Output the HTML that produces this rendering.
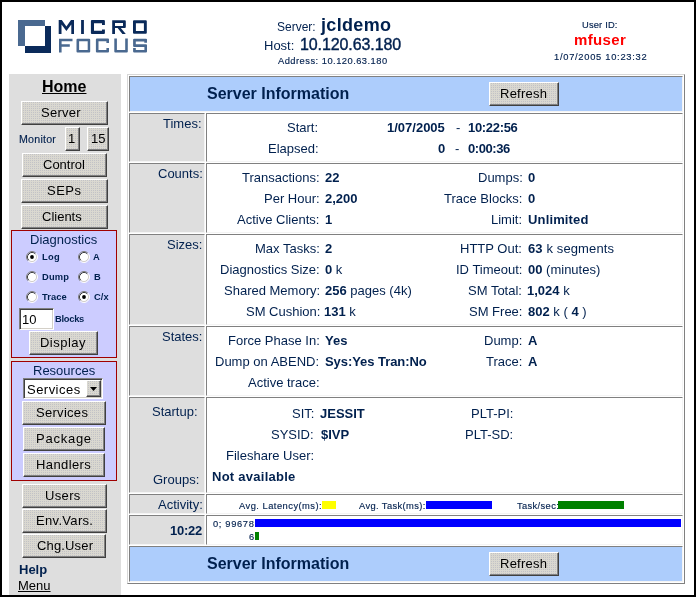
<!DOCTYPE html><html><head><meta charset="utf-8"><style>
html,body{margin:0;padding:0;width:696px;height:597px;overflow:hidden;background:#fff;}
body{position:relative;font-family:"Liberation Sans",sans-serif;}
.t{will-change:transform;}
b{font-weight:bold}
</style></head><body>
<div style="position:absolute;left:0px;top:0px;width:696px;height:597px;border:2px solid #000;box-sizing:border-box;background:#fff;"></div>
<svg style="position:absolute;left:0;top:0" width="160" height="60" viewBox="0 0 160 60">
<path fill="#4a6990" d="M18 20H45V26H25V46H18Z"/>
<path fill="#0a2a5a" d="M45 26H51V53H25V46H45Z"/>
<g fill="#0a2a5a">
<path d="M58.7 34V20H61.8L66.4 26.6L71 20H74V34H71.3V24.6L66.4 31L61.5 24.6V34Z"/>
<rect x="81.1" y="20" width="2.8" height="14"/>
<path d="M104.9 25.1V21Q104.9 20 103.9 20H91.9Q90.9 20 90.9 21V33Q90.9 34 91.9 34H103.9Q104.9 34 104.9 33V29.5H102V30.8H94V23.3H102V25.1Z"/>
<path d="M112.2 34V20.2H124.8Q125.8 20.2 125.8 21.2V27.1Q125.8 28.1 124.8 28.1H120.8L125.8 33.9H122.4L117.6 28.1H115V34ZM115 23H123V25.9H115Z" fill-rule="evenodd"/>
<path d="M134 20.2H145.8Q146.8 20.2 146.8 21.2V32.8Q146.8 33.8 145.8 33.8H134Q133 33.8 133 32.8V21.2Q133 20.2 134 20.2ZM135.9 23.2V31H143.9V23.2Z" fill-rule="evenodd"/>
</g>
<g fill="#4a6990">
<path d="M59 52.5V38.7H72.5V41.2H61.6V44.2H69.8V46.8H61.6V52.5Z"/>
<path d="M77.5 38.7H89.2Q90.2 38.7 90.2 39.7V51.5Q90.2 52.5 89.2 52.5H77.5Q76.5 52.5 76.5 51.5V39.7Q76.5 38.7 77.5 38.7ZM79.1 41.3V49.9H87.7V41.3Z" fill-rule="evenodd"/>
<path d="M109 43.1V39.6Q109 38.6 108 38.6H96.9Q95.9 38.6 95.9 39.6V51.6Q95.9 52.6 96.9 52.6H108Q109 52.6 109 51.6V48H106.4V50H98.5V41.2H106.4V43.1Z"/>
<path d="M114.3 38.6H116.9V50H125.2V38.6H127.8V51.6Q127.8 52.6 126.8 52.6H115.3Q114.3 52.6 114.3 51.6Z"/>
<path d="M147 42.8V39.6Q147 38.7 146 38.7H134.1Q133.1 38.7 133.1 39.7V46Q133.1 47 134.1 47H144.4V49.9H135.8V48.1H133.1V51.6Q133.1 52.6 134.1 52.6H146Q147 52.6 147 51.6V45.3Q147 44.3 146 44.3H135.8V41.4H144.3V42.8Z"/>
</g>
</svg>
<div style="position:absolute;left:9px;top:74px;width:112px;height:521px;background:#dedede;"></div>
<div style="position:absolute;left:21px;top:101px;width:87px;height:24px;background:#dad8d0 conic-gradient(#c2c2c6 25%, transparent 0) 0 0/2px 2px;border-top:1px solid #fff;border-left:1px solid #fff;border-right:1px solid #404040;border-bottom:1px solid #404040;box-sizing:border-box;box-shadow:inset -1px -1px 0 #808080;"></div>
<div style="position:absolute;left:65px;top:127px;width:15px;height:24px;background:#dad8d0 conic-gradient(#c2c2c6 25%, transparent 0) 0 0/2px 2px;border-top:1px solid #fff;border-left:1px solid #fff;border-right:1px solid #404040;border-bottom:1px solid #404040;box-sizing:border-box;box-shadow:inset -1px -1px 0 #808080;"></div>
<div style="position:absolute;left:87px;top:127px;width:22px;height:24px;background:#dad8d0 conic-gradient(#c2c2c6 25%, transparent 0) 0 0/2px 2px;border-top:1px solid #fff;border-left:1px solid #fff;border-right:1px solid #404040;border-bottom:1px solid #404040;box-sizing:border-box;box-shadow:inset -1px -1px 0 #808080;"></div>
<div style="position:absolute;left:22px;top:153px;width:85px;height:24px;background:#dad8d0 conic-gradient(#c2c2c6 25%, transparent 0) 0 0/2px 2px;border-top:1px solid #fff;border-left:1px solid #fff;border-right:1px solid #404040;border-bottom:1px solid #404040;box-sizing:border-box;box-shadow:inset -1px -1px 0 #808080;"></div>
<div style="position:absolute;left:21px;top:179px;width:87px;height:24px;background:#dad8d0 conic-gradient(#c2c2c6 25%, transparent 0) 0 0/2px 2px;border-top:1px solid #fff;border-left:1px solid #fff;border-right:1px solid #404040;border-bottom:1px solid #404040;box-sizing:border-box;box-shadow:inset -1px -1px 0 #808080;"></div>
<div style="position:absolute;left:21px;top:205px;width:87px;height:24px;background:#dad8d0 conic-gradient(#c2c2c6 25%, transparent 0) 0 0/2px 2px;border-top:1px solid #fff;border-left:1px solid #fff;border-right:1px solid #404040;border-bottom:1px solid #404040;box-sizing:border-box;box-shadow:inset -1px -1px 0 #808080;"></div>
<div style="position:absolute;left:11px;top:230px;width:106px;height:128px;background:#ccccff;border:1px solid #a00000;box-sizing:border-box;"></div>
<svg style="position:absolute;left:26px;top:251px" width="12" height="12" viewBox="0 0 12 12"><circle cx="6" cy="6" r="4.6" fill="#fff"/><path d="M2.11 9.89A5.5 5.5 0 0 1 9.89 2.11" stroke="#808080" stroke-width="1" fill="none"/><path d="M9.89 2.11A5.5 5.5 0 0 1 2.11 9.89" stroke="#fff" stroke-width="1" fill="none"/><path d="M2.82 9.18A4.5 4.5 0 0 1 9.18 2.82" stroke="#404040" stroke-width="1" fill="none"/><path d="M9.18 2.82A4.5 4.5 0 0 1 2.82 9.18" stroke="#d4d0c8" stroke-width="1" fill="none"/><circle cx="6" cy="6" r="1.9" fill="#000"/></svg>
<svg style="position:absolute;left:78px;top:251px" width="12" height="12" viewBox="0 0 12 12"><circle cx="6" cy="6" r="4.6" fill="#fff"/><path d="M2.11 9.89A5.5 5.5 0 0 1 9.89 2.11" stroke="#808080" stroke-width="1" fill="none"/><path d="M9.89 2.11A5.5 5.5 0 0 1 2.11 9.89" stroke="#fff" stroke-width="1" fill="none"/><path d="M2.82 9.18A4.5 4.5 0 0 1 9.18 2.82" stroke="#404040" stroke-width="1" fill="none"/><path d="M9.18 2.82A4.5 4.5 0 0 1 2.82 9.18" stroke="#d4d0c8" stroke-width="1" fill="none"/></svg>
<svg style="position:absolute;left:26px;top:271px" width="12" height="12" viewBox="0 0 12 12"><circle cx="6" cy="6" r="4.6" fill="#fff"/><path d="M2.11 9.89A5.5 5.5 0 0 1 9.89 2.11" stroke="#808080" stroke-width="1" fill="none"/><path d="M9.89 2.11A5.5 5.5 0 0 1 2.11 9.89" stroke="#fff" stroke-width="1" fill="none"/><path d="M2.82 9.18A4.5 4.5 0 0 1 9.18 2.82" stroke="#404040" stroke-width="1" fill="none"/><path d="M9.18 2.82A4.5 4.5 0 0 1 2.82 9.18" stroke="#d4d0c8" stroke-width="1" fill="none"/></svg>
<svg style="position:absolute;left:78px;top:271px" width="12" height="12" viewBox="0 0 12 12"><circle cx="6" cy="6" r="4.6" fill="#fff"/><path d="M2.11 9.89A5.5 5.5 0 0 1 9.89 2.11" stroke="#808080" stroke-width="1" fill="none"/><path d="M9.89 2.11A5.5 5.5 0 0 1 2.11 9.89" stroke="#fff" stroke-width="1" fill="none"/><path d="M2.82 9.18A4.5 4.5 0 0 1 9.18 2.82" stroke="#404040" stroke-width="1" fill="none"/><path d="M9.18 2.82A4.5 4.5 0 0 1 2.82 9.18" stroke="#d4d0c8" stroke-width="1" fill="none"/></svg>
<svg style="position:absolute;left:26px;top:291px" width="12" height="12" viewBox="0 0 12 12"><circle cx="6" cy="6" r="4.6" fill="#fff"/><path d="M2.11 9.89A5.5 5.5 0 0 1 9.89 2.11" stroke="#808080" stroke-width="1" fill="none"/><path d="M9.89 2.11A5.5 5.5 0 0 1 2.11 9.89" stroke="#fff" stroke-width="1" fill="none"/><path d="M2.82 9.18A4.5 4.5 0 0 1 9.18 2.82" stroke="#404040" stroke-width="1" fill="none"/><path d="M9.18 2.82A4.5 4.5 0 0 1 2.82 9.18" stroke="#d4d0c8" stroke-width="1" fill="none"/></svg>
<svg style="position:absolute;left:78px;top:291px" width="12" height="12" viewBox="0 0 12 12"><circle cx="6" cy="6" r="4.6" fill="#fff"/><path d="M2.11 9.89A5.5 5.5 0 0 1 9.89 2.11" stroke="#808080" stroke-width="1" fill="none"/><path d="M9.89 2.11A5.5 5.5 0 0 1 2.11 9.89" stroke="#fff" stroke-width="1" fill="none"/><path d="M2.82 9.18A4.5 4.5 0 0 1 9.18 2.82" stroke="#404040" stroke-width="1" fill="none"/><path d="M9.18 2.82A4.5 4.5 0 0 1 2.82 9.18" stroke="#d4d0c8" stroke-width="1" fill="none"/><circle cx="6" cy="6" r="1.9" fill="#000"/></svg>
<div style="position:absolute;left:19px;top:308px;width:35px;height:22px;background:#fff;border-top:1px solid #808080;border-left:1px solid #808080;border-right:1px solid #fff;border-bottom:1px solid #fff;box-sizing:border-box;box-shadow:inset 1px 1px 0 #404040, inset -1px -1px 0 #d4d0c8;"></div>
<div style="position:absolute;left:29px;top:331px;width:69px;height:24px;background:#dad8d0 conic-gradient(#c2c2c6 25%, transparent 0) 0 0/2px 2px;border-top:1px solid #fff;border-left:1px solid #fff;border-right:1px solid #404040;border-bottom:1px solid #404040;box-sizing:border-box;box-shadow:inset -1px -1px 0 #808080;"></div>
<div style="position:absolute;left:11px;top:361px;width:106px;height:120px;background:#ccccff;border:1px solid #a00000;box-sizing:border-box;"></div>
<div style="position:absolute;left:23px;top:378px;width:80px;height:21px;background:#fff;border-top:1px solid #808080;border-left:1px solid #808080;border-right:1px solid #fff;border-bottom:1px solid #fff;box-sizing:border-box;box-shadow:inset 1px 1px 0 #404040, inset -1px -1px 0 #d4d0c8;"></div>
<div style="position:absolute;left:86px;top:380px;width:15px;height:17px;background:#dad8d0 conic-gradient(#c2c2c6 25%, transparent 0) 0 0/2px 2px;border-top:1px solid #fff;border-left:1px solid #fff;border-right:1px solid #404040;border-bottom:1px solid #404040;box-sizing:border-box;box-shadow:inset -1px -1px 0 #808080;"></div>
<svg style="position:absolute;left:90px;top:387px" width="8" height="5"><path d="M0 0H7L3.5 4Z" fill="#000"/></svg>
<div style="position:absolute;left:22px;top:401px;width:84px;height:24px;background:#dad8d0 conic-gradient(#c2c2c6 25%, transparent 0) 0 0/2px 2px;border-top:1px solid #fff;border-left:1px solid #fff;border-right:1px solid #404040;border-bottom:1px solid #404040;box-sizing:border-box;box-shadow:inset -1px -1px 0 #808080;"></div>
<div style="position:absolute;left:23px;top:427px;width:82px;height:24px;background:#dad8d0 conic-gradient(#c2c2c6 25%, transparent 0) 0 0/2px 2px;border-top:1px solid #fff;border-left:1px solid #fff;border-right:1px solid #404040;border-bottom:1px solid #404040;box-sizing:border-box;box-shadow:inset -1px -1px 0 #808080;"></div>
<div style="position:absolute;left:23px;top:453px;width:82px;height:24px;background:#dad8d0 conic-gradient(#c2c2c6 25%, transparent 0) 0 0/2px 2px;border-top:1px solid #fff;border-left:1px solid #fff;border-right:1px solid #404040;border-bottom:1px solid #404040;box-sizing:border-box;box-shadow:inset -1px -1px 0 #808080;"></div>
<div style="position:absolute;left:22px;top:484px;width:85px;height:24px;background:#dad8d0 conic-gradient(#c2c2c6 25%, transparent 0) 0 0/2px 2px;border-top:1px solid #fff;border-left:1px solid #fff;border-right:1px solid #404040;border-bottom:1px solid #404040;box-sizing:border-box;box-shadow:inset -1px -1px 0 #808080;"></div>
<div style="position:absolute;left:22px;top:509px;width:85px;height:24px;background:#dad8d0 conic-gradient(#c2c2c6 25%, transparent 0) 0 0/2px 2px;border-top:1px solid #fff;border-left:1px solid #fff;border-right:1px solid #404040;border-bottom:1px solid #404040;box-sizing:border-box;box-shadow:inset -1px -1px 0 #808080;"></div>
<div style="position:absolute;left:22px;top:534px;width:84px;height:24px;background:#dad8d0 conic-gradient(#c2c2c6 25%, transparent 0) 0 0/2px 2px;border-top:1px solid #fff;border-left:1px solid #fff;border-right:1px solid #404040;border-bottom:1px solid #404040;box-sizing:border-box;box-shadow:inset -1px -1px 0 #808080;"></div>
<div style="position:absolute;left:127px;top:74px;width:558px;height:510px;border-top:1px solid #d8d8d8;border-left:1px solid #d8d8d8;border-right:1px solid #808080;border-bottom:1px solid #808080;box-sizing:border-box;"></div>
<div style="position:absolute;left:129px;top:76px;width:554px;height:36px;background:#adcdfc;border-top:1px solid #808080;border-left:1px solid #808080;border-right:1px solid #f4f4f4;border-bottom:1px solid #f4f4f4;box-sizing:border-box;"></div>
<div style="position:absolute;left:129px;top:113px;width:76px;height:49px;background:#dedede;border-top:1px solid #808080;border-left:1px solid #808080;border-right:1px solid #f4f4f4;border-bottom:1px solid #f4f4f4;box-sizing:border-box;"></div>
<div style="position:absolute;left:206px;top:113px;width:477px;height:49px;background:#fff;border-top:1px solid #808080;border-left:1px solid #808080;border-right:1px solid #f4f4f4;border-bottom:1px solid #f4f4f4;box-sizing:border-box;"></div>
<div style="position:absolute;left:129px;top:163px;width:76px;height:70px;background:#dedede;border-top:1px solid #808080;border-left:1px solid #808080;border-right:1px solid #f4f4f4;border-bottom:1px solid #f4f4f4;box-sizing:border-box;"></div>
<div style="position:absolute;left:206px;top:163px;width:477px;height:70px;background:#fff;border-top:1px solid #808080;border-left:1px solid #808080;border-right:1px solid #f4f4f4;border-bottom:1px solid #f4f4f4;box-sizing:border-box;"></div>
<div style="position:absolute;left:129px;top:234px;width:76px;height:91px;background:#dedede;border-top:1px solid #808080;border-left:1px solid #808080;border-right:1px solid #f4f4f4;border-bottom:1px solid #f4f4f4;box-sizing:border-box;"></div>
<div style="position:absolute;left:206px;top:234px;width:477px;height:91px;background:#fff;border-top:1px solid #808080;border-left:1px solid #808080;border-right:1px solid #f4f4f4;border-bottom:1px solid #f4f4f4;box-sizing:border-box;"></div>
<div style="position:absolute;left:129px;top:326px;width:76px;height:70px;background:#dedede;border-top:1px solid #808080;border-left:1px solid #808080;border-right:1px solid #f4f4f4;border-bottom:1px solid #f4f4f4;box-sizing:border-box;"></div>
<div style="position:absolute;left:206px;top:326px;width:477px;height:70px;background:#fff;border-top:1px solid #808080;border-left:1px solid #808080;border-right:1px solid #f4f4f4;border-bottom:1px solid #f4f4f4;box-sizing:border-box;"></div>
<div style="position:absolute;left:129px;top:397px;width:76px;height:96px;background:#dedede;border-top:1px solid #808080;border-left:1px solid #808080;border-right:1px solid #f4f4f4;border-bottom:1px solid #f4f4f4;box-sizing:border-box;"></div>
<div style="position:absolute;left:206px;top:397px;width:477px;height:96px;background:#fff;border-top:1px solid #808080;border-left:1px solid #808080;border-right:1px solid #f4f4f4;border-bottom:1px solid #f4f4f4;box-sizing:border-box;"></div>
<div style="position:absolute;left:129px;top:494px;width:76px;height:20px;background:#dedede;border-top:1px solid #808080;border-left:1px solid #808080;border-right:1px solid #f4f4f4;border-bottom:1px solid #f4f4f4;box-sizing:border-box;"></div>
<div style="position:absolute;left:206px;top:494px;width:477px;height:20px;background:#fff;border-top:1px solid #808080;border-left:1px solid #808080;border-right:1px solid #f4f4f4;border-bottom:1px solid #f4f4f4;box-sizing:border-box;"></div>
<div style="position:absolute;left:129px;top:515px;width:76px;height:30px;background:#dedede;border-top:1px solid #808080;border-left:1px solid #808080;border-right:1px solid #f4f4f4;border-bottom:1px solid #f4f4f4;box-sizing:border-box;"></div>
<div style="position:absolute;left:206px;top:515px;width:477px;height:30px;background:#fff;border-top:1px solid #808080;border-left:1px solid #808080;border-right:1px solid #f4f4f4;border-bottom:1px solid #f4f4f4;box-sizing:border-box;"></div>
<div style="position:absolute;left:129px;top:546px;width:554px;height:36px;background:#adcdfc;border-top:1px solid #808080;border-left:1px solid #808080;border-right:1px solid #f4f4f4;border-bottom:1px solid #f4f4f4;box-sizing:border-box;"></div>
<div style="position:absolute;left:489px;top:82px;width:70px;height:24px;background:#dad8d0 conic-gradient(#c2c2c6 25%, transparent 0) 0 0/2px 2px;border-top:1px solid #fff;border-left:1px solid #fff;border-right:1px solid #404040;border-bottom:1px solid #404040;box-sizing:border-box;box-shadow:inset -1px -1px 0 #808080;"></div>
<div style="position:absolute;left:489px;top:552px;width:70px;height:24px;background:#dad8d0 conic-gradient(#c2c2c6 25%, transparent 0) 0 0/2px 2px;border-top:1px solid #fff;border-left:1px solid #fff;border-right:1px solid #404040;border-bottom:1px solid #404040;box-sizing:border-box;box-shadow:inset -1px -1px 0 #808080;"></div>
<div style="position:absolute;left:322px;top:501px;width:14px;height:8px;background:#ffff00;"></div>
<div style="position:absolute;left:426px;top:501px;width:66px;height:8px;background:#0000ff;"></div>
<div style="position:absolute;left:558px;top:501px;width:66px;height:8px;background:#008000;"></div>
<div style="position:absolute;left:255px;top:519px;width:426px;height:8px;background:#0000ff;"></div>
<div style="position:absolute;left:255px;top:532px;width:4px;height:8px;background:#008000;"></div>
<div class="t" id="t0" style="position:absolute;top:12px;line-height:30px;font-size:12px;color:#00204e;white-space:nowrap;left:277.20px;">Server:</div>
<div class="t" id="t1" style="position:absolute;top:10px;line-height:30px;font-size:18px;color:#00204e;white-space:nowrap;font-weight:bold;letter-spacing:0.34px;left:320.60px;">jcldemo</div>
<div class="t" id="t2" style="position:absolute;top:31px;line-height:30px;font-size:13px;color:#00204e;white-space:nowrap;left:264.00px;">Host:</div>
<div class="t" id="t3" style="position:absolute;top:30px;line-height:30px;font-size:16px;color:#00204e;white-space:nowrap;letter-spacing:-0.10px;left:300.00px;-webkit-text-stroke:0.4px;">10.120.63.180</div>
<div class="t" id="t4" style="position:absolute;top:46px;line-height:30px;font-size:9.33px;color:#00204e;white-space:nowrap;letter-spacing:0.48px;left:278.20px;-webkit-text-stroke:0.15px;">Address: 10.120.63.180</div>
<div class="t" id="t5" style="position:absolute;top:10px;line-height:30px;font-size:9.33px;color:#00204e;white-space:nowrap;letter-spacing:0.17px;left:582.20px;-webkit-text-stroke:0.15px;">User ID:</div>
<div class="t" id="t6" style="position:absolute;top:25px;line-height:30px;font-size:15px;color:#ff0000;white-space:nowrap;font-weight:bold;letter-spacing:0.37px;left:574.40px;">mfuser</div>
<div class="t" id="t7" style="position:absolute;top:42px;line-height:30px;font-size:9.33px;color:#00204e;white-space:nowrap;letter-spacing:0.72px;left:554.00px;-webkit-text-stroke:0.15px;">1/07/2005 10:23:32</div>
<div class="t" id="t8" style="position:absolute;top:72px;line-height:30px;font-size:16px;color:#000;white-space:nowrap;font-weight:bold;text-decoration:underline;left:41.50px;">Home</div>
<div class="t" id="t9" style="position:absolute;top:98px;line-height:30px;font-size:13px;color:#000;white-space:nowrap;letter-spacing:0.25px;left:40.50px;">Server</div>
<div class="t" id="t10" style="position:absolute;top:124px;line-height:30px;font-size:10.67px;color:#00204e;white-space:nowrap;letter-spacing:0.23px;left:19.20px;-webkit-text-stroke:0.15px;">Monitor</div>
<div class="t" id="t11" style="position:absolute;top:124px;line-height:30px;font-size:13px;color:#000;white-space:nowrap;left:68.20px;">1</div>
<div class="t" id="t12" style="position:absolute;top:124px;line-height:30px;font-size:13px;color:#000;white-space:nowrap;left:90.90px;">15</div>
<div class="t" id="t13" style="position:absolute;top:150px;line-height:30px;font-size:13px;color:#000;white-space:nowrap;left:42.50px;">Control</div>
<div class="t" id="t14" style="position:absolute;top:176px;line-height:30px;font-size:13px;color:#000;white-space:nowrap;letter-spacing:0.50px;left:47.00px;">SEPs</div>
<div class="t" id="t15" style="position:absolute;top:202px;line-height:30px;font-size:13px;color:#000;white-space:nowrap;left:42.10px;">Clients</div>
<div class="t" id="t16" style="position:absolute;top:225px;line-height:30px;font-size:13px;color:#00204e;white-space:nowrap;left:30.20px;">Diagnostics</div>
<div class="t" id="t17" style="position:absolute;top:242px;line-height:30px;font-size:9.33px;color:#00204e;white-space:nowrap;font-weight:bold;letter-spacing:0.30px;left:41.60px;">Log</div>
<div class="t" id="t18" style="position:absolute;top:242px;line-height:30px;font-size:9.33px;color:#00204e;white-space:nowrap;font-weight:bold;left:92.60px;">A</div>
<div class="t" id="t19" style="position:absolute;top:262px;line-height:30px;font-size:9.33px;color:#00204e;white-space:nowrap;font-weight:bold;letter-spacing:0.15px;left:41.60px;">Dump</div>
<div class="t" id="t20" style="position:absolute;top:262px;line-height:30px;font-size:9.33px;color:#00204e;white-space:nowrap;font-weight:bold;left:93.75px;">B</div>
<div class="t" id="t21" style="position:absolute;top:282px;line-height:30px;font-size:9.33px;color:#00204e;white-space:nowrap;font-weight:bold;letter-spacing:0.08px;left:42.10px;">Trace</div>
<div class="t" id="t22" style="position:absolute;top:282px;line-height:30px;font-size:9.33px;color:#00204e;white-space:nowrap;font-weight:bold;letter-spacing:0.05px;left:93.70px;">C/x</div>
<div class="t" id="t23" style="position:absolute;top:305px;line-height:30px;font-size:13px;color:#000;white-space:nowrap;left:21.50px;">10</div>
<div class="t" id="t24" style="position:absolute;top:304px;line-height:30px;font-size:9.33px;color:#00204e;white-space:nowrap;font-weight:bold;letter-spacing:-0.26px;left:54.70px;">Blocks</div>
<div class="t" id="t25" style="position:absolute;top:328px;line-height:30px;font-size:13px;color:#000;white-space:nowrap;letter-spacing:0.47px;left:40.40px;">Display</div>
<div class="t" id="t26" style="position:absolute;top:356px;line-height:30px;font-size:13px;color:#00204e;white-space:nowrap;left:32.50px;">Resources</div>
<div class="t" id="t27" style="position:absolute;top:375px;line-height:30px;font-size:13px;color:#000;white-space:nowrap;letter-spacing:0.47px;left:27.10px;">Services</div>
<div class="t" id="t28" style="position:absolute;top:398px;line-height:30px;font-size:13px;color:#000;white-space:nowrap;letter-spacing:0.29px;left:36.40px;">Services</div>
<div class="t" id="t29" style="position:absolute;top:424px;line-height:30px;font-size:13px;color:#000;white-space:nowrap;letter-spacing:0.75px;left:36.40px;">Package</div>
<div class="t" id="t30" style="position:absolute;top:450px;line-height:30px;font-size:13px;color:#000;white-space:nowrap;letter-spacing:0.40px;left:36.40px;">Handlers</div>
<div class="t" id="t31" style="position:absolute;top:481px;line-height:30px;font-size:13px;color:#000;white-space:nowrap;letter-spacing:0.34px;left:44.50px;">Users</div>
<div class="t" id="t32" style="position:absolute;top:506px;line-height:30px;font-size:13px;color:#000;white-space:nowrap;letter-spacing:0.32px;left:36.40px;">Env.Vars.</div>
<div class="t" id="t33" style="position:absolute;top:531px;line-height:30px;font-size:13px;color:#000;white-space:nowrap;letter-spacing:0.15px;left:37.10px;">Chg.User</div>
<div class="t" id="t34" style="position:absolute;top:555px;line-height:30px;font-size:13px;color:#00204e;white-space:nowrap;font-weight:bold;left:19.00px;">Help</div>
<div class="t" id="t35" style="position:absolute;top:571px;line-height:30px;font-size:13px;color:#000;white-space:nowrap;text-decoration:underline;left:18.40px;">Menu</div>
<div class="t" id="t36" style="position:absolute;top:79px;line-height:30px;font-size:16px;color:#00204e;white-space:nowrap;font-weight:bold;left:207.30px;">Server Information</div>
<div class="t" id="t37" style="position:absolute;top:79px;line-height:30px;font-size:13px;color:#000;white-space:nowrap;letter-spacing:0.24px;left:500.20px;">Refresh</div>
<div class="t" id="t38" style="position:absolute;top:549px;line-height:30px;font-size:16px;color:#00204e;white-space:nowrap;font-weight:bold;left:207.30px;">Server Information</div>
<div class="t" id="t39" style="position:absolute;top:549px;line-height:30px;font-size:13px;color:#000;white-space:nowrap;letter-spacing:0.24px;left:500.20px;">Refresh</div>
<div class="t" id="t40" style="position:absolute;top:109px;line-height:30px;font-size:13px;color:#00204e;white-space:nowrap;right:494.20px;">Times:</div>
<div class="t" id="t41" style="position:absolute;top:159px;line-height:30px;font-size:13px;color:#00204e;white-space:nowrap;right:493.20px;">Counts:</div>
<div class="t" id="t42" style="position:absolute;top:230px;line-height:30px;font-size:13px;color:#00204e;white-space:nowrap;right:493.20px;">Sizes:</div>
<div class="t" id="t43" style="position:absolute;top:322px;line-height:30px;font-size:13px;color:#00204e;white-space:nowrap;right:493.20px;">States:</div>
<div class="t" id="t44" style="position:absolute;top:397px;line-height:30px;font-size:13px;color:#00204e;white-space:nowrap;right:498.20px;">Startup:</div>
<div class="t" id="t45" style="position:absolute;top:465px;line-height:30px;font-size:13px;color:#00204e;white-space:nowrap;right:497.20px;">Groups:</div>
<div class="t" id="t46" style="position:absolute;top:490px;line-height:30px;font-size:13px;color:#00204e;white-space:nowrap;right:493.20px;">Activity:</div>
<div class="t" id="t47" style="position:absolute;top:516px;line-height:30px;font-size:13px;color:#00204e;white-space:nowrap;font-weight:bold;letter-spacing:-0.28px;left:170.00px;">10:22</div>
<div class="t" id="t48" style="position:absolute;top:113px;line-height:30px;font-size:13px;color:#00204e;white-space:nowrap;right:377.50px;">Start:</div>
<div class="t" id="t49" style="position:absolute;top:134px;line-height:30px;font-size:13px;color:#00204e;white-space:nowrap;right:377.50px;">Elapsed:</div>
<div class="t" id="t50" style="position:absolute;top:113px;line-height:30px;font-size:13px;color:#00204e;white-space:nowrap;font-weight:bold;right:250.75px;">1/07/2005</div>
<div class="t" id="t51" style="position:absolute;top:134px;line-height:30px;font-size:13px;color:#00204e;white-space:nowrap;font-weight:bold;right:251.00px;">0</div>
<div class="t" id="t52" style="position:absolute;top:113px;line-height:30px;font-size:13px;color:#00204e;white-space:nowrap;left:455.80px;">-</div>
<div class="t" id="t53" style="position:absolute;top:134px;line-height:30px;font-size:13px;color:#00204e;white-space:nowrap;left:454.50px;">-</div>
<div class="t" id="t54" style="position:absolute;top:113px;line-height:30px;font-size:13px;color:#00204e;white-space:nowrap;font-weight:bold;letter-spacing:-0.32px;left:468.00px;">10:22:56</div>
<div class="t" id="t55" style="position:absolute;top:134px;line-height:30px;font-size:13px;color:#00204e;white-space:nowrap;font-weight:bold;letter-spacing:-0.44px;left:468.40px;">0:00:36</div>
<div class="t" id="t56" style="position:absolute;top:163px;line-height:30px;font-size:13px;color:#00204e;white-space:nowrap;right:376.50px;">Transactions:</div>
<div class="t" id="t57" style="position:absolute;top:163px;line-height:30px;font-size:13px;color:#00204e;white-space:nowrap;left:325.00px;"><b>22</b></div>
<div class="t" id="t58" style="position:absolute;top:184px;line-height:30px;font-size:13px;color:#00204e;white-space:nowrap;right:376.50px;">Per Hour:</div>
<div class="t" id="t59" style="position:absolute;top:184px;line-height:30px;font-size:13px;color:#00204e;white-space:nowrap;left:325.00px;"><b>2,200</b></div>
<div class="t" id="t60" style="position:absolute;top:205px;line-height:30px;font-size:13px;color:#00204e;white-space:nowrap;right:376.50px;">Active Clients:</div>
<div class="t" id="t61" style="position:absolute;top:205px;line-height:30px;font-size:13px;color:#00204e;white-space:nowrap;left:325.20px;"><b>1</b></div>
<div class="t" id="t62" style="position:absolute;top:163px;line-height:30px;font-size:13px;color:#00204e;white-space:nowrap;right:173.50px;">Dumps:</div>
<div class="t" id="t63" style="position:absolute;top:163px;line-height:30px;font-size:13px;color:#00204e;white-space:nowrap;left:528.40px;"><b>0</b></div>
<div class="t" id="t64" style="position:absolute;top:184px;line-height:30px;font-size:13px;color:#00204e;white-space:nowrap;right:173.50px;">Trace Blocks:</div>
<div class="t" id="t65" style="position:absolute;top:184px;line-height:30px;font-size:13px;color:#00204e;white-space:nowrap;left:528.40px;"><b>0</b></div>
<div class="t" id="t66" style="position:absolute;top:205px;line-height:30px;font-size:13px;color:#00204e;white-space:nowrap;right:173.50px;">Limit:</div>
<div class="t" id="t67" style="position:absolute;top:205px;line-height:30px;font-size:13px;color:#00204e;white-space:nowrap;letter-spacing:0.15px;left:528.00px;"><b>Unlimited</b></div>
<div class="t" id="t68" style="position:absolute;top:234px;line-height:30px;font-size:13px;color:#00204e;white-space:nowrap;right:376.40px;">Max Tasks:</div>
<div class="t" id="t69" style="position:absolute;top:234px;line-height:30px;font-size:13px;color:#00204e;white-space:nowrap;left:324.80px;"><b>2</b></div>
<div class="t" id="t70" style="position:absolute;top:255px;line-height:30px;font-size:13px;color:#00204e;white-space:nowrap;right:376.40px;">Diagnostics Size:</div>
<div class="t" id="t71" style="position:absolute;top:255px;line-height:30px;font-size:13px;color:#00204e;white-space:nowrap;left:324.80px;"><b>0</b> k</div>
<div class="t" id="t72" style="position:absolute;top:276px;line-height:30px;font-size:13px;color:#00204e;white-space:nowrap;right:376.40px;">Shared Memory:</div>
<div class="t" id="t73" style="position:absolute;top:276px;line-height:30px;font-size:13px;color:#00204e;white-space:nowrap;left:325.00px;"><b>256</b> pages (4k)</div>
<div class="t" id="t74" style="position:absolute;top:297px;line-height:30px;font-size:13px;color:#00204e;white-space:nowrap;right:375.60px;">SM Cushion:</div>
<div class="t" id="t75" style="position:absolute;top:297px;line-height:30px;font-size:13px;color:#00204e;white-space:nowrap;left:324.40px;"><b>131</b> k</div>
<div class="t" id="t76" style="position:absolute;top:234px;line-height:30px;font-size:13px;color:#00204e;white-space:nowrap;right:174.10px;">HTTP Out:</div>
<div class="t" id="t77" style="position:absolute;top:234px;line-height:30px;font-size:13px;color:#00204e;white-space:nowrap;letter-spacing:0.12px;left:528.10px;"><b>63</b> k segments</div>
<div class="t" id="t78" style="position:absolute;top:255px;line-height:30px;font-size:13px;color:#00204e;white-space:nowrap;right:173.40px;">ID Timeout:</div>
<div class="t" id="t79" style="position:absolute;top:255px;line-height:30px;font-size:13px;color:#00204e;white-space:nowrap;left:528.10px;"><b>00</b> (minutes)</div>
<div class="t" id="t80" style="position:absolute;top:276px;line-height:30px;font-size:13px;color:#00204e;white-space:nowrap;right:174.10px;">SM Total:</div>
<div class="t" id="t81" style="position:absolute;top:276px;line-height:30px;font-size:13px;color:#00204e;white-space:nowrap;left:527.00px;"><b>1,024</b> k</div>
<div class="t" id="t82" style="position:absolute;top:297px;line-height:30px;font-size:13px;color:#00204e;white-space:nowrap;right:173.40px;">SM Free:</div>
<div class="t" id="t83" style="position:absolute;top:297px;line-height:30px;font-size:13px;color:#00204e;white-space:nowrap;left:528.00px;"><b>802</b> k ( <b>4</b> )</div>
<div class="t" id="t84" style="position:absolute;top:326px;line-height:30px;font-size:13px;color:#00204e;white-space:nowrap;right:376.50px;">Force Phase In:</div>
<div class="t" id="t85" style="position:absolute;top:326px;line-height:30px;font-size:13px;color:#00204e;white-space:nowrap;left:325.00px;"><b>Yes</b></div>
<div class="t" id="t86" style="position:absolute;top:347px;line-height:30px;font-size:13px;color:#00204e;white-space:nowrap;right:376.50px;">Dump on ABEND:</div>
<div class="t" id="t87" style="position:absolute;top:347px;line-height:30px;font-size:13px;color:#00204e;white-space:nowrap;letter-spacing:-0.06px;left:325.00px;"><b>Sys:Yes Tran:No</b></div>
<div class="t" id="t88" style="position:absolute;top:368px;line-height:30px;font-size:13px;color:#00204e;white-space:nowrap;right:376.50px;">Active trace:</div>
<div class="t" id="t89" style="position:absolute;top:326px;line-height:30px;font-size:13px;color:#00204e;white-space:nowrap;right:173.90px;">Dump:</div>
<div class="t" id="t90" style="position:absolute;top:326px;line-height:30px;font-size:13px;color:#00204e;white-space:nowrap;left:527.80px;"><b>A</b></div>
<div class="t" id="t91" style="position:absolute;top:347px;line-height:30px;font-size:13px;color:#00204e;white-space:nowrap;right:173.90px;">Trace:</div>
<div class="t" id="t92" style="position:absolute;top:347px;line-height:30px;font-size:13px;color:#00204e;white-space:nowrap;left:527.80px;"><b>A</b></div>
<div class="t" id="t93" style="position:absolute;top:399px;line-height:30px;font-size:13px;color:#00204e;white-space:nowrap;right:381.20px;">SIT:</div>
<div class="t" id="t94" style="position:absolute;top:399px;line-height:30px;font-size:13px;color:#00204e;white-space:nowrap;left:319.60px;"><b>JESSIT</b></div>
<div class="t" id="t95" style="position:absolute;top:420px;line-height:30px;font-size:13px;color:#00204e;white-space:nowrap;right:382.60px;">SYSID:</div>
<div class="t" id="t96" style="position:absolute;top:420px;line-height:30px;font-size:13px;color:#00204e;white-space:nowrap;left:320.80px;"><b>$IVP</b></div>
<div class="t" id="t97" style="position:absolute;top:441px;line-height:30px;font-size:13px;color:#00204e;white-space:nowrap;right:381.80px;">Fileshare User:</div>
<div class="t" id="t98" style="position:absolute;top:399px;line-height:30px;font-size:13px;color:#00204e;white-space:nowrap;right:182.20px;">PLT-PI:</div>
<div class="t" id="t99" style="position:absolute;top:420px;line-height:30px;font-size:13px;color:#00204e;white-space:nowrap;right:183.00px;">PLT-SD:</div>
<div class="t" id="t100" style="position:absolute;top:462px;line-height:30px;font-size:13px;color:#00204e;white-space:nowrap;letter-spacing:0.26px;left:212.00px;"><b>Not available</b></div>
<div class="t" id="t101" style="position:absolute;top:491px;line-height:30px;font-size:9.33px;color:#00204e;white-space:nowrap;letter-spacing:0.48px;left:239.20px;-webkit-text-stroke:0.15px;">Avg. Latency(ms):</div>
<div class="t" id="t102" style="position:absolute;top:491px;line-height:30px;font-size:9.33px;color:#00204e;white-space:nowrap;letter-spacing:0.39px;left:359.00px;-webkit-text-stroke:0.15px;">Avg. Task(ms):</div>
<div class="t" id="t103" style="position:absolute;top:491px;line-height:30px;font-size:9.33px;color:#00204e;white-space:nowrap;letter-spacing:0.36px;left:516.60px;-webkit-text-stroke:0.15px;">Task/sec:</div>
<div class="t" id="t104" style="position:absolute;top:509px;line-height:30px;font-size:9.33px;color:#00204e;white-space:nowrap;letter-spacing:0.65px;left:212.80px;-webkit-text-stroke:0.15px;">0; 99678</div>
<div class="t" id="t105" style="position:absolute;top:522px;line-height:30px;font-size:9.33px;color:#00204e;white-space:nowrap;right:441.90px;-webkit-text-stroke:0.15px;">6</div>
</body></html>
